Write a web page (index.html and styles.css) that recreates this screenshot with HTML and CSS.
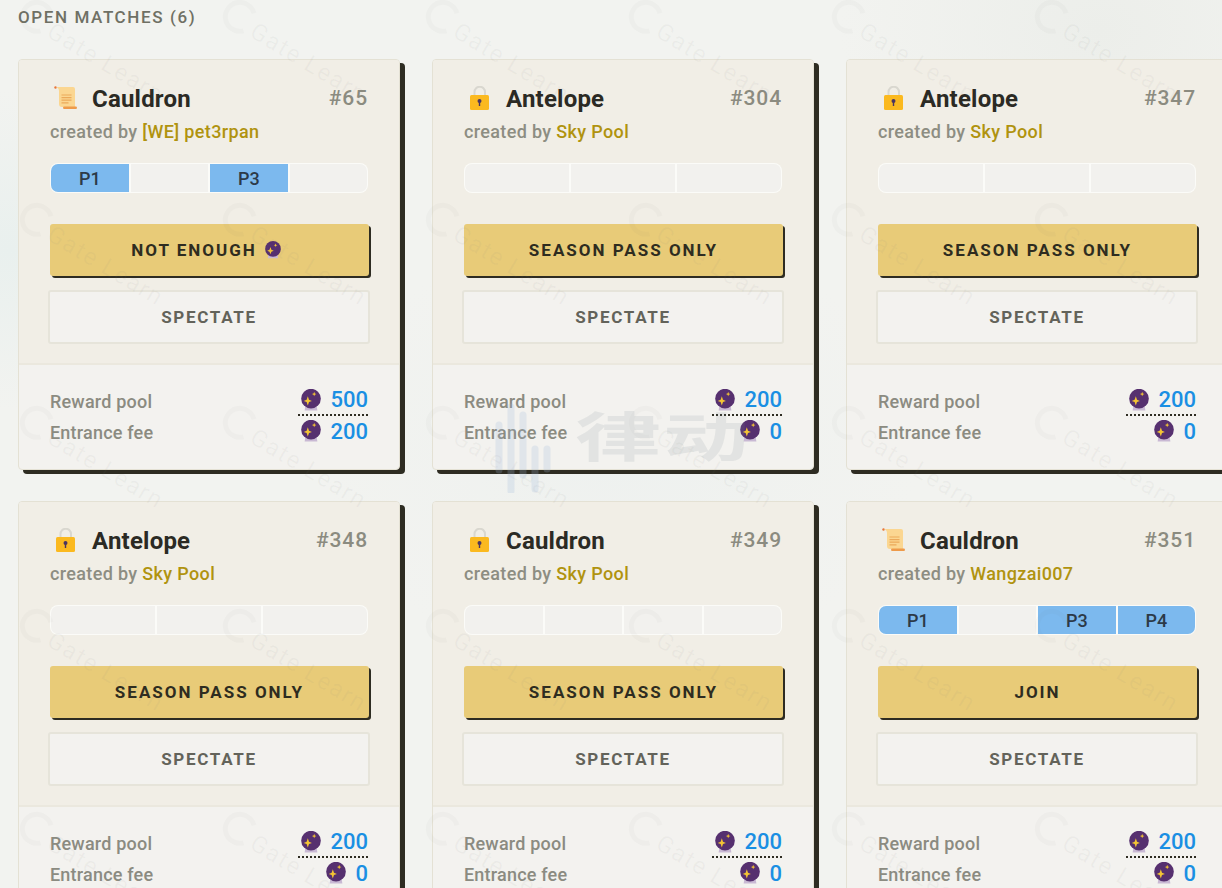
FILE: index.html
```html
<!DOCTYPE html>
<html lang="en">
<head>
<meta charset="utf-8">
<title>Open Matches</title>
<link rel="stylesheet" href="styles.css">
</head>
<body class="page">
<svg class="defs" width="0" height="0" aria-hidden="true">
  <symbol id="scroll" viewBox="0 0 24 24">
    <circle cx="1.5" cy="1.5" r="1.2" fill="#e8763a"/>
    <path d="M2 1h17q2 0 2 2v18H8q-3 0-3-3V5q0-3-3-4z" fill="#fbd691"/>
    <path d="M7.5 9h10M7.5 11.6h10M7.5 14.2h10M7.5 16.8h7" stroke="#eba95a" stroke-width="1.2"/>
    <rect x="9" y="20.5" width="14" height="2.4" rx="1.2" fill="#ee9a4a"/>
  </symbol>
  <symbol id="lock" viewBox="0 0 24 24">
    <path d="M6.5 10V6a5 5 0 0 1 10.500 0v4" fill="none" stroke="#d9d7cf" stroke-width="2"/>
    <rect x="2" y="9" width="19" height="15" rx="1.500" fill="#fbb91f"/>
    <circle cx="11.500" cy="15" r="2" fill="#4b3560"/>
    <rect x="10.800" y="15" width="1.400" height="5" fill="#4b3560"/>
  </symbol>
  <symbol id="orb" viewBox="0 0 22 24">
    <path d="M5 17h12l1 6.500H4z" fill="#c9b9d4"/>
    <circle cx="11" cy="10.500" r="10.800" fill="#56306f"/>
    <path d="M7.500 8l1.300 3.700 3.200 1.300-3.200 1.300-1.300 3.700-1.300-3.700-3.200-1.300 3.200-1.300z" fill="#f4c534"/>
    <path d="M14.500 3l.7 1.800 1.800.7-1.800.7-.7 1.800-.7-1.800-1.800-.7 1.800-.7z" fill="#f4c534"/>
  </symbol>
</svg>

<main class="content">
  <h1 class="heading">OPEN MATCHES (6)</h1>
  <div class="grid">

    <article class="card">
      <div class="card-top">
        <header class="card-head">
          <svg class="kind-icon"><use href="#scroll"/></svg>
          <h2 class="title">Cauldron</h2>
          <span class="match-id">#65</span>
        </header>
        <p class="creator">created by <span class="creator-name">[WE] pet3rpan</span></p>
        <div class="slots">
          <span class="slot filled">P1</span><span class="slot"></span><span class="slot filled">P3</span><span class="slot"></span>
        </div>
        <button class="btn-main">NOT ENOUGH <svg class="btn-orb"><use href="#orb"/></svg></button>
        <button class="btn-ghost">SPECTATE</button>
      </div>
      <div class="card-foot">
        <div class="row"><span class="row-label">Reward pool</span><span class="amount dotted"><svg class="orb"><use href="#orb"/></svg><b class="num">500</b></span></div>
        <div class="row"><span class="row-label">Entrance fee</span><span class="amount"><svg class="orb"><use href="#orb"/></svg><b class="num">200</b></span></div>
      </div>
    </article>

    <article class="card">
      <div class="card-top">
        <header class="card-head">
          <svg class="kind-icon"><use href="#lock"/></svg>
          <h2 class="title">Antelope</h2>
          <span class="match-id">#304</span>
        </header>
        <p class="creator">created by <span class="creator-name">Sky Pool</span></p>
        <div class="slots"><span class="slot"></span><span class="slot"></span><span class="slot"></span></div>
        <button class="btn-main">SEASON PASS ONLY</button>
        <button class="btn-ghost">SPECTATE</button>
      </div>
      <div class="card-foot">
        <div class="row"><span class="row-label">Reward pool</span><span class="amount dotted"><svg class="orb"><use href="#orb"/></svg><b class="num">200</b></span></div>
        <div class="row"><span class="row-label">Entrance fee</span><span class="amount"><svg class="orb"><use href="#orb"/></svg><b class="num">0</b></span></div>
      </div>
    </article>

    <article class="card">
      <div class="card-top">
        <header class="card-head">
          <svg class="kind-icon"><use href="#lock"/></svg>
          <h2 class="title">Antelope</h2>
          <span class="match-id">#347</span>
        </header>
        <p class="creator">created by <span class="creator-name">Sky Pool</span></p>
        <div class="slots"><span class="slot"></span><span class="slot"></span><span class="slot"></span></div>
        <button class="btn-main">SEASON PASS ONLY</button>
        <button class="btn-ghost">SPECTATE</button>
      </div>
      <div class="card-foot">
        <div class="row"><span class="row-label">Reward pool</span><span class="amount dotted"><svg class="orb"><use href="#orb"/></svg><b class="num">200</b></span></div>
        <div class="row"><span class="row-label">Entrance fee</span><span class="amount"><svg class="orb"><use href="#orb"/></svg><b class="num">0</b></span></div>
      </div>
    </article>

    <article class="card">
      <div class="card-top">
        <header class="card-head">
          <svg class="kind-icon"><use href="#lock"/></svg>
          <h2 class="title">Antelope</h2>
          <span class="match-id">#348</span>
        </header>
        <p class="creator">created by <span class="creator-name">Sky Pool</span></p>
        <div class="slots"><span class="slot"></span><span class="slot"></span><span class="slot"></span></div>
        <button class="btn-main">SEASON PASS ONLY</button>
        <button class="btn-ghost">SPECTATE</button>
      </div>
      <div class="card-foot">
        <div class="row"><span class="row-label">Reward pool</span><span class="amount dotted"><svg class="orb"><use href="#orb"/></svg><b class="num">200</b></span></div>
        <div class="row"><span class="row-label">Entrance fee</span><span class="amount"><svg class="orb"><use href="#orb"/></svg><b class="num">0</b></span></div>
      </div>
    </article>

    <article class="card">
      <div class="card-top">
        <header class="card-head">
          <svg class="kind-icon"><use href="#lock"/></svg>
          <h2 class="title">Cauldron</h2>
          <span class="match-id">#349</span>
        </header>
        <p class="creator">created by <span class="creator-name">Sky Pool</span></p>
        <div class="slots"><span class="slot"></span><span class="slot"></span><span class="slot"></span><span class="slot"></span></div>
        <button class="btn-main">SEASON PASS ONLY</button>
        <button class="btn-ghost">SPECTATE</button>
      </div>
      <div class="card-foot">
        <div class="row"><span class="row-label">Reward pool</span><span class="amount dotted"><svg class="orb"><use href="#orb"/></svg><b class="num">200</b></span></div>
        <div class="row"><span class="row-label">Entrance fee</span><span class="amount"><svg class="orb"><use href="#orb"/></svg><b class="num">0</b></span></div>
      </div>
    </article>

    <article class="card">
      <div class="card-top">
        <header class="card-head">
          <svg class="kind-icon"><use href="#scroll"/></svg>
          <h2 class="title">Cauldron</h2>
          <span class="match-id">#351</span>
        </header>
        <p class="creator">created by <span class="creator-name">Wangzai007</span></p>
        <div class="slots">
          <span class="slot filled">P1</span><span class="slot"></span><span class="slot filled">P3</span><span class="slot filled">P4</span>
        </div>
        <button class="btn-main">JOIN</button>
        <button class="btn-ghost">SPECTATE</button>
      </div>
      <div class="card-foot">
        <div class="row"><span class="row-label">Reward pool</span><span class="amount dotted"><svg class="orb"><use href="#orb"/></svg><b class="num">200</b></span></div>
        <div class="row"><span class="row-label">Entrance fee</span><span class="amount"><svg class="orb"><use href="#orb"/></svg><b class="num">0</b></span></div>
      </div>
    </article>

  </div>
</main>

<div class="wm-layer" aria-hidden="true">
  <span class="wm">Gate Learn</span><span class="wm">Gate Learn</span><span class="wm">Gate Learn</span><span class="wm">Gate Learn</span><span class="wm">Gate Learn</span><span class="wm">Gate Learn</span>
  <span class="wm">Gate Learn</span><span class="wm">Gate Learn</span><span class="wm">Gate Learn</span><span class="wm">Gate Learn</span><span class="wm">Gate Learn</span><span class="wm">Gate Learn</span>
  <span class="wm">Gate Learn</span><span class="wm">Gate Learn</span><span class="wm">Gate Learn</span><span class="wm">Gate Learn</span><span class="wm">Gate Learn</span><span class="wm">Gate Learn</span>
  <span class="wm">Gate Learn</span><span class="wm">Gate Learn</span><span class="wm">Gate Learn</span><span class="wm">Gate Learn</span><span class="wm">Gate Learn</span><span class="wm">Gate Learn</span>
  <span class="wm">Gate Learn</span><span class="wm">Gate Learn</span><span class="wm">Gate Learn</span><span class="wm">Gate Learn</span><span class="wm">Gate Learn</span><span class="wm">Gate Learn</span>
</div>

<div class="brand-mark" aria-hidden="true">
  <svg class="brand-bars" viewBox="0 0 60 90">
    <path d="M4 22v45M16 4v84M28 12v60M40 46v40M52 46v20" stroke="#9fb8dc" stroke-width="7" stroke-linecap="round" fill="none"/>
  </svg>
  <span class="brand-text">律动</span>
</div>
</body>
</html>
```

FILE: styles.css
```css
* {
  box-sizing: border-box;
}

html,
body {
  margin: 0;
  height: 100%;
  overflow: hidden;
}

.page {
  position: relative;
  font-family: Roboto, "Liberation Sans", sans-serif;
  background-color: #f2f3f0;
  background-image:
    radial-gradient(ellipse 220px 160px at 10px 250px, #e9f0ee 0%, transparent 100%),
    radial-gradient(ellipse 300px 220px at 620px 450px, #eef1ef 0%, transparent 100%),
    radial-gradient(ellipse 260px 200px at 1100px 30px, #eceeea 0%, transparent 100%);
}

.defs {
  position: absolute;
}

.content {
  padding: 8px 0 0 18px;
}

.heading {
  margin: 0 0 33px;
  font-size: 17px;
  line-height: 18px;
  font-weight: 500;
  letter-spacing: 1.6px;
  color: #6f7064;
}

.grid {
  display: grid;
  grid-template-columns: repeat(3, 382px);
  column-gap: 32px;
  row-gap: 31px;
}

.card {
  display: flex;
  flex-direction: column;
  height: 411px;
  border: 1px solid #e4e1d4;
  border-radius: 4px;
  background: #f3f2ef;
  box-shadow: 5px 4px 0 #2e2c22;
}

.card-top {
  display: flex;
  flex-direction: column;
  height: 305px;
  padding: 26px 31px 0;
  background: #f1eee6;
  border-bottom: 2px solid #ebe8de;
  border-radius: 3px 3px 0 0;
}

.card-head {
  display: flex;
  align-items: center;
  height: 24px;
}

.kind-icon {
  flex: none;
  width: 24px;
  height: 24px;
  margin-left: 4px;
}

.title {
  flex: 1;
  margin: 2px 0 0 14px;
  font-size: 24px;
  line-height: 24px;
  font-weight: 700;
  letter-spacing: 0.2px;
  color: #2b2a24;
}

.match-id {
  font-size: 21px;
  font-weight: 500;
  letter-spacing: 0.9px;
  color: #8b8b80;
}

.creator {
  margin: 12px 0 0;
  font-size: 18px;
  line-height: 20px;
  font-weight: 500;
  letter-spacing: 0.35px;
  color: #8d8d82;
}

.creator-name {
  color: #b0930f;
}

.slots {
  display: flex;
  gap: 2px;
  height: 30px;
  margin-top: 21px;
  padding: 1px;
  border-radius: 8px;
  background: #fbfbf8;
  overflow: hidden;
}

.slot {
  flex: 1;
  display: flex;
  align-items: center;
  justify-content: center;
  font-size: 18px;
  font-weight: 500;
  color: #2c3a48;
  background: #f2f1ee;
}

.slot:first-child {
  border-radius: 7px 0 0 7px;
}

.slot:last-child {
  border-radius: 0 7px 7px 0;
}

.slot.filled {
  background: #7cb9ee;
}

.btn-main {
  display: flex;
  align-items: center;
  justify-content: center;
  gap: 8px;
  flex: none;
  width: 319px;
  height: 52px;
  margin-top: 31px;
  border: 0;
  border-radius: 3px;
  background: #e8cb78;
  box-shadow: 2px 2px 0 #2e2c22;
  font: 700 17px Roboto, "Liberation Sans", sans-serif;
  letter-spacing: 2px;
  color: #2e2c20;
}

.btn-orb {
  width: 16px;
  height: 18px;
  margin-right: 7px;
}

.btn-ghost {
  flex: none;
  width: 322px;
  height: 54px;
  margin: 14px 0 0 -2px;
  border: 2px solid #e6e4da;
  border-radius: 3px;
  background: #f3f2ef;
  font: 700 17px Roboto, "Liberation Sans", sans-serif;
  letter-spacing: 1.7px;
  color: #63635a;
}

.card-foot {
  display: flex;
  flex-direction: column;
  gap: 5px;
  padding: 23px 31px 0;
}

.row {
  display: flex;
  align-items: center;
  justify-content: space-between;
  height: 26px;
}

.row-label {
  font-size: 18px;
  font-weight: 500;
  letter-spacing: 0.2px;
  color: #8b8b81;
}

.amount {
  display: flex;
  align-items: center;
  justify-content: flex-end;
  gap: 9px;
  height: 26px;
  padding: 0 0 2px;
}

.amount.dotted {
  min-width: 70px;
  height: 28px;
  margin-top: 2px;
  padding: 0 0 3px;
  border-bottom: 2px dotted #2e2c22;
}

.orb {
  flex: none;
  width: 20px;
  height: 22px;
}

.num {
  font-size: 22px;
  font-weight: 500;
  color: #1a8fe3;
}

.wm-layer {
  position: absolute;
  top: 0;
  left: 0;
  display: grid;
  grid-template-columns: repeat(6, 203px);
  grid-auto-rows: 203px;
  pointer-events: none;
}

.wm {
  justify-self: start;
  align-self: start;
  margin: -9px 0 0 22px;
  font-size: 24px;
  line-height: 28px;
  letter-spacing: 1.5px;
  white-space: nowrap;
  color: rgba(120, 125, 120, 0.06);
  transform: rotate(31deg);
  transform-origin: left center;
}

.wm::before {
  content: "";
  display: inline-block;
  width: 24px;
  height: 24px;
  margin-right: 0;
  border: 5px solid rgba(120, 125, 120, 0.035);
  border-right-color: transparent;
  border-radius: 50%;
  vertical-align: -5px;
}

.brand-mark {
  position: absolute;
  top: 403px;
  left: 495px;
  display: flex;
  align-items: flex-start;
  gap: 20px;
  pointer-events: none;
}

.brand-bars {
  width: 60px;
  height: 90px;
  opacity: 0.22;
}

.brand-text {
  margin-top: 4px;
  font-family: "Noto Sans CJK SC", sans-serif;
  font-size: 86px;
  line-height: 86px;
  font-weight: 700;
  letter-spacing: 2px;
  color: rgba(130, 140, 150, 0.14);
  transform: scaleY(0.62);
  transform-origin: top left;
}
```
